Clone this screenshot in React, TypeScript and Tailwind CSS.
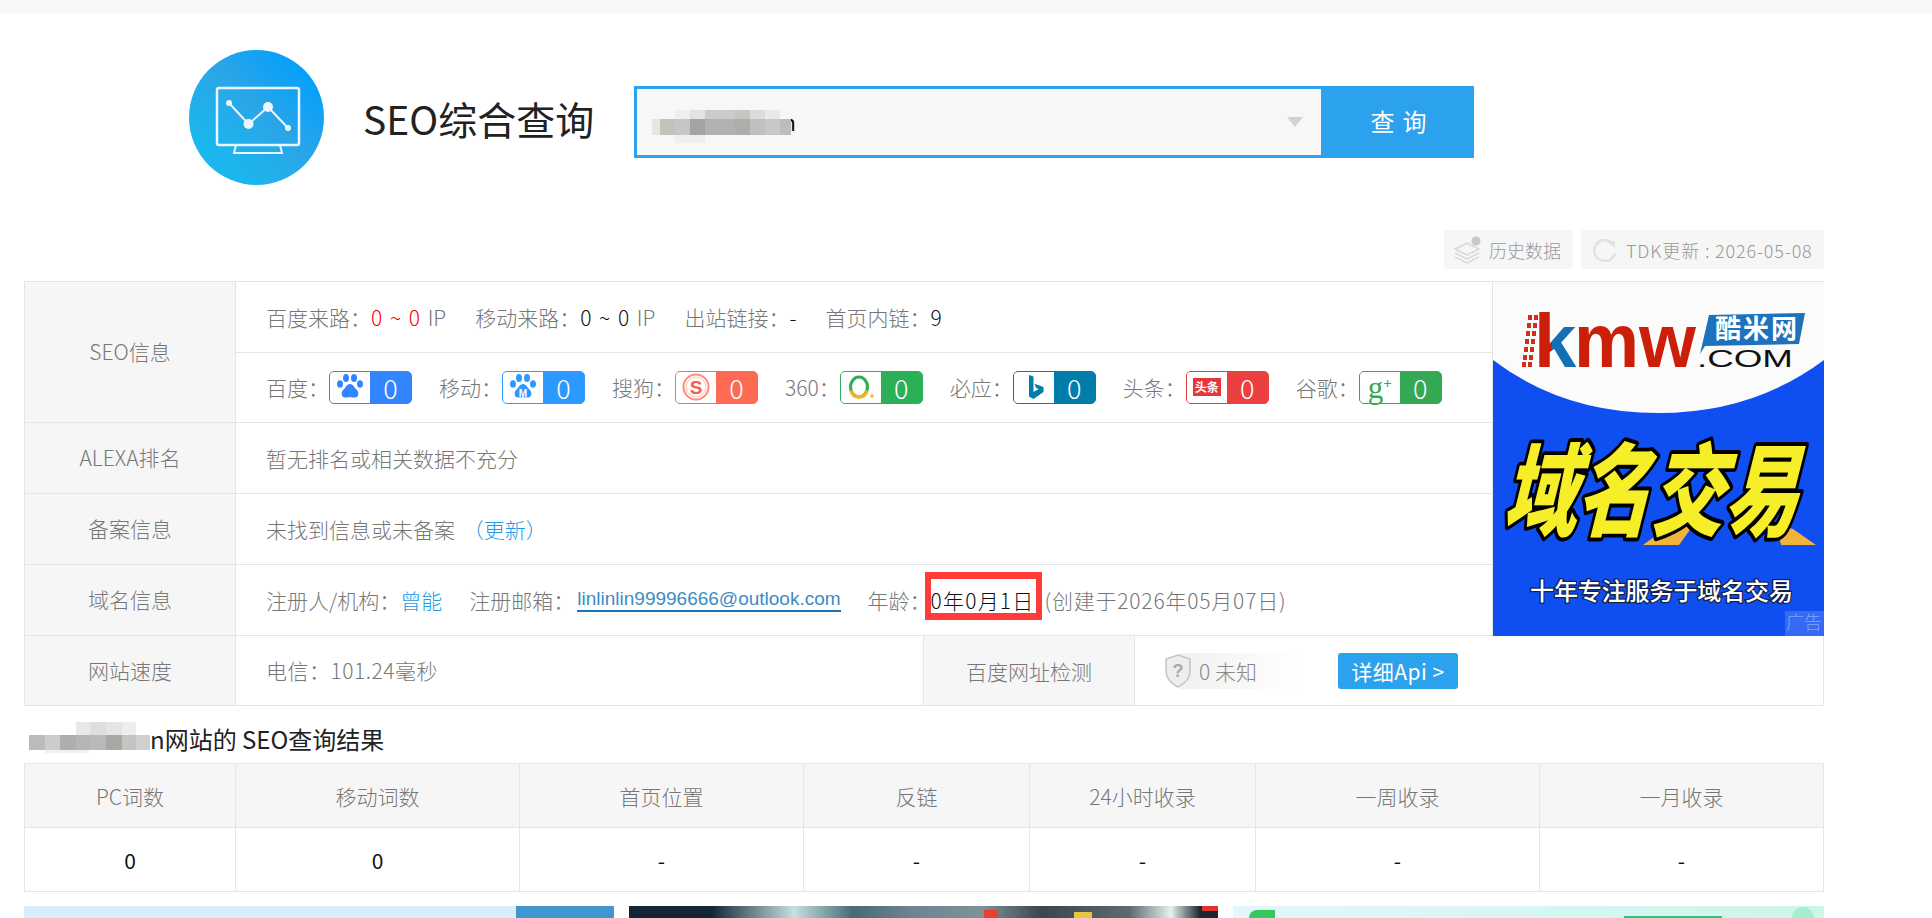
import React from "react";

const Mosaic = ({ blocks, w, h }: { blocks: [number, number, number, number, string][]; w: number; h: number }) => (
  <svg width={w} height={h} viewBox={`0 0 ${w} ${h}`} className="block">
    {blocks.map((b, i) => (
      <rect key={i} x={b[0]} y={b[1]} width={b[2]} height={b[3]} fill={b[4]} />
    ))}
  </svg>
);

const Paw = ({ c, m }: { c: string; m?: boolean }) => (
  <svg width="28" height="28" viewBox="0 0 28 28">
    <ellipse cx="10" cy="5" rx="3" ry="4" fill={c} />
    <ellipse cx="18" cy="5" rx="3" ry="4" fill={c} />
    <ellipse cx="4" cy="11" rx="3" ry="3.8" fill={c} />
    <ellipse cx="24" cy="11" rx="3" ry="3.8" fill={c} />
    <path d="M14 11c-3 0-4 3-6 5-2 2-3 4-2 6.500 1 2.500 4 2.500 8 1.500 4 1 7 1 8-1.500 1-2.500 0-4.500-2-6.500-2-2-3-5-6-5z" fill={c} />
    {m && (
      <text x="14" y="24" textAnchor="middle" fontSize="10" fontWeight="700" fill="#fff" fontFamily="Liberation Sans">
        M
      </text>
    )}
  </svg>
);

const Sogou = () => (
  <svg width="30" height="30" viewBox="0 0 30 30">
    <circle cx="15" cy="15" r="12.500" fill="none" stroke="#ff8a78" strokeWidth="2" />
    <circle cx="15" cy="15" r="10" fill="none" stroke="#ffc4ba" strokeWidth="1" />
    <text x="15" y="21.500" textAnchor="middle" fontSize="19" fontWeight="700" fill="#f4604a" fontFamily="Liberation Sans">
      S
    </text>
  </svg>
);

const Q360 = () => (
  <svg width="32" height="30" viewBox="0 0 32 30">
    <ellipse cx="14" cy="15" rx="8.500" ry="10" fill="none" stroke="#2fae57" strokeWidth="3.200" />
    <path d="M5.800 18.500C7 23 10.500 25 14 25s7-2 8.200-6.500" fill="none" stroke="#f5b323" strokeWidth="3.200" />
    <circle cx="27" cy="24" r="1.700" fill="#f5b323" />
  </svg>
);

const Bing = () => (
  <svg width="24" height="30" viewBox="0 0 24 30">
    <path d="M7 3l4.500 1.500v15.500l5-3-2.500-1.200-1.500-4 9 3.200v5L11.500 27 7 24.500z" fill="#007dab" />
  </svg>
);

const Toutiao = () => (
  <span className="flex h-[18px] w-[28px] items-center justify-center bg-[#e8343b] text-[12px] font-bold leading-[18px] text-white">头条</span>
);

const GPlus = () => (
  <span className="flex items-start font-['Liberation_Serif',serif] text-[#34a853]">
    <span className="text-[31px] leading-[27px]">g</span>
    <span className="text-[15px] font-bold leading-[18px]">+</span>
  </span>
);

const Badge = ({ label, color, icon }: { label: string; color: string; icon: React.ReactNode }) => (
  <div className="flex items-center">
    <span>{label}：</span>
    <span className="flex h-[33px] w-[83px] items-stretch rounded-[5px] border" style={{ borderColor: color, background: color }}>
      <span className="flex w-[40px] items-center justify-center rounded-l-[4px] bg-white">{icon}</span>
      <span className="flex flex-1 items-center justify-center text-[27px] font-light leading-[31px] text-white">0</span>
    </span>
  </div>
);

const LabelCell = ({ children, className = "" }: { children: React.ReactNode; className?: string }) => (
  <div className={`flex items-center justify-center border-r border-b border-[#e5e5e5] bg-[#f6f6f6] pb-[2px] ${className}`}>{children}</div>
);

const Row = ({ children, className = "" }: { children: React.ReactNode; className?: string }) => (
  <div className={`flex items-center gap-[27px] border-r border-b border-[#e5e5e5] pb-[1px] pl-[30px] ${className}`}>{children}</div>
);

const Ad = () => (
  <svg viewBox="0 0 331 354" width="331" height="354" className="block">
    <defs>
      <linearGradient id="kk" x1="0" x2="1" y1="0" y2="0">
        <stop offset="0.42" stopColor="#cc1f0a" />
        <stop offset="0.43" stopColor="#1370b5" />
      </linearGradient>
    </defs>
    <rect width="331" height="354" fill="#0f4ff2" />
    <path d="M0 78Q70 131 165 131T331 78V0H0Z" fill="#fbfbfb" />
    {[33, 41, 49, 57, 65, 73, 80].map((y, i) => (
      <g key={y} fill="#d92a18">
        <rect x={35 - i} y={y} width="4" height="5" />
        <rect x={41 - i} y={y} width="4" height="5" />
      </g>
    ))}
    <text x="41" y="85" fontFamily="Liberation Sans" fontWeight="700" fontSize="76" fill="url(#kk)">k</text>
    <text x="81" y="85" fontFamily="Liberation Sans" fontWeight="700" fontSize="76" fill="#cc1f0a" textLength="122" lengthAdjust="spacingAndGlyphs">mw</text>
    <path d="M216 33L312 31 306 62 212 64 207 72Z" fill="#1d72bb" />
    <text x="222" y="56" fontFamily="Noto Sans CJK SC" fontWeight="700" fontSize="26" fill="#fff" textLength="82">酷米网</text>
    <text x="204" y="85" fontFamily="Liberation Sans" fontSize="23" fill="#111" textLength="96" lengthAdjust="spacingAndGlyphs">.COM</text>
    <path d="M150 263L192 232 204 238 186 263Z" fill="#f0b43a" />
    <path d="M288 263L284 243 300 247 323 263Z" fill="#f0b43a" />
    <text transform="translate(9 246) skewX(-14) scale(0.82 1.12)" fontFamily="Noto Sans CJK SC" fontWeight="900" fontSize="90" fill="#f7ee2a" stroke="#000" strokeWidth="7" strokeLinejoin="round" paintOrder="stroke">域名交易</text>
    <text x="37" y="318" fontFamily="Noto Sans CJK SC" fontWeight="500" fontSize="24" fill="#fff" stroke="#13204a" strokeWidth="2.500" paintOrder="stroke" textLength="263">十年专注服务于域名交易</text>
    <rect x="292" y="329" width="39" height="25" fill="#fff" fillOpacity="0.16" />
    <text x="293" y="347" fontFamily="Noto Sans CJK SC" fontSize="18" fill="#7da6f5">广告</text>
  </svg>
);

export default function App() {
  return (
    <div className="h-[918px] w-full overflow-hidden bg-white font-['Noto_Sans_CJK_SC',sans-serif] text-[21px] font-light leading-[30px] text-[#777]">
      <div className="h-[13px] bg-[#f7f7f7]" />

      {/* header */}
      <div className="flex h-[217px] items-start pl-[189px] pt-[37px]">
        <div className="flex h-[135px] w-[135px] items-center justify-center rounded-full bg-[linear-gradient(45deg,#14c0f2,#2aa5e8_55%,#05a0fb_85%)]">
          <svg width="135" height="135" viewBox="0 0 135 135">
            <rect x="28" y="38" width="82" height="57" rx="2" fill="none" stroke="#eaf6fd" strokeWidth="2.500" />
            <path d="M47 95l-2 8h48l-2-8M45 103h48" fill="none" stroke="#eaf6fd" strokeWidth="2" />
            <path d="M40 53L59.500 74 79 57 99 78" fill="none" stroke="#eaf6fd" strokeWidth="2" />
            <circle cx="40" cy="53" r="3" fill="#eaf6fd" />
            <circle cx="59.500" cy="74" r="5" fill="#eaf6fd" />
            <circle cx="79" cy="57" r="5" fill="#eaf6fd" />
            <circle cx="99" cy="78" r="3" fill="#eaf6fd" />
          </svg>
        </div>
        <div className="ml-[39px] mt-[10px] w-[271px] text-[39px] font-normal leading-[116px] text-[#222]">SEO综合查询</div>
        <div className="relative mt-[36px] flex h-[72px] w-[840px]">
          <div className="relative flex flex-1 items-center border-[3px] border-r-0 border-[#2ca1ed] bg-[#f7f7f7]">
            <span className="absolute left-[146px] top-[18px] text-[21px] font-normal text-black">n</span>
            <div className="absolute left-[15px] top-[21px]">
              <Mosaic
                w={140}
                h={33}
                blocks={[
                  [23, 0, 15, 9, "#f0efef"],
                  [38, 0, 15, 9, "#e3e3e3"],
                  [53, 0, 30, 9, "#cbcbcb"],
                  [83, 0, 15, 9, "#c6c6c5"],
                  [98, 0, 15, 9, "#dcdcdc"],
                  [113, 0, 15, 9, "#e9e9e9"],
                  [0, 9, 8, 16, "#e6e5e4"],
                  [8, 9, 15, 16, "#c5c2be"],
                  [23, 9, 15, 16, "#c4c6c8"],
                  [38, 9, 15, 16, "#a5a4a4"],
                  [53, 9, 30, 16, "#b1b1b1"],
                  [83, 9, 15, 16, "#aeadaa"],
                  [98, 9, 15, 16, "#c0c0c2"],
                  [113, 9, 15, 16, "#c8c8ca"],
                  [128, 9, 11, 16, "#bdbdbd"],
                  [23, 25, 30, 8, "#efefef"],
                ]}
              />
            </div>
            <svg className="absolute right-[18px] top-[28px]" width="16" height="10" viewBox="0 0 16 10">
              <path d="M0 0H16L8 10Z" fill="#d2d2d2" />
            </svg>
          </div>
          <button className="flex w-[153px] items-center justify-center bg-[#2ca1ed] pl-[10px] pb-[2px] text-[24px] font-normal tracking-[8px] text-white">查询</button>
        </div>
      </div>

      {/* toolbar */}
      <div className="ml-[24px] flex h-[51px] w-[1800px] items-start justify-end gap-[8px] text-[18px] text-[#999]">
        <div className="flex h-[39px] w-[129px] items-center rounded-[3px] bg-[#f6f6f6] pl-[9px]">
          <svg width="28" height="28" viewBox="0 0 28 28">
            <path d="M14 7L26 13 14 19 2 13Z" fill="none" stroke="#d8d8d8" strokeWidth="1.500" />
            <path d="M2 17l12 6 12-6M2 21l12 6 12-6" fill="none" stroke="#d8d8d8" strokeWidth="1.500" />
            <circle cx="23" cy="5" r="4.500" fill="#c9c9c9" />
          </svg>
          <span className="ml-[8px]">历史数据</span>
        </div>
        <div className="flex h-[39px] w-[243px] items-center rounded-[3px] bg-[#f6f6f6] pl-[12px]">
          <svg width="24" height="24" viewBox="0 0 24 24">
            <path d="M20 6A10.500 10.500 0 1 0 22 15" fill="none" stroke="#e2e2e2" strokeWidth="2.500" />
            <path d="M13 3l9 0 0 7z" fill="#e2e2e2" />
          </svg>
          <span className="ml-[9px] tracking-[0.85px]">TDK更新 : 2026-05-08</span>
        </div>
      </div>

      {/* info table */}
      <div className="ml-[24px] grid w-[1800px] grid-cols-[211px_1257px_331px] grid-rows-[71px_70px_71px_71px_71px_70px] border-t border-l border-[#e5e5e5]">
        <LabelCell className="row-span-2">SEO信息</LabelCell>
        <Row className="gap-[29px] [word-spacing:3px]">
          <span>
            百度来路：<span className="text-[#f00]">0 ~ 0</span> IP
          </span>
          <span>
            移动来路：<span className="text-[#111]">0 ~ 0</span> IP
          </span>
          <span>
            出站链接：<span className="text-[#111]">-</span>
          </span>
          <span>
            首页内链：<span className="text-[#111]">9</span>
          </span>
        </Row>
        <div className="row-span-5 border-r border-b border-[#e5e5e5]">
          <Ad />
        </div>
        <Row>
          <Badge label="百度" color="#3385ff" icon={<Paw c="#3385ff" />} />
          <Badge label="移动" color="#2b99ff" icon={<Paw c="#2b99ff" m />} />
          <Badge label="搜狗" color="#ff6a55" icon={<Sogou />} />
          <Badge label="360" color="#2bb057" icon={<Q360 />} />
          <Badge label="必应" color="#007dab" icon={<Bing />} />
          <Badge label="头条" color="#ea4040" icon={<Toutiao />} />
          <Badge label="谷歌" color="#34a853" icon={<GPlus />} />
        </Row>
        <LabelCell>ALEXA排名</LabelCell>
        <Row>暂无排名或相关数据不充分</Row>
        <LabelCell>备案信息</LabelCell>
        <Row>
          <span>
            未找到信息或未备案 <span className="ml-[3px] text-[#1e9bec]">（更新）</span>
          </span>
        </Row>
        <LabelCell>域名信息</LabelCell>
        <Row>
          <span>
            注册人/机构：<span className="text-[#1e9bec]">曾能</span>
          </span>
          <span className="flex items-center">
            注册邮箱：
            <span className="ml-[3px] border-b-2 border-[#1775bb] font-['Liberation_Sans',sans-serif] text-[19px] font-normal leading-[23px] text-[#3c8cc4]">linlinlin99996666@outlook.com</span>
          </span>
          <span className="flex items-center">
            年龄：
            <span className="relative tracking-[1.2px] text-[#111]">
              0年0月1日
              <span className="absolute left-[-6px] top-[-13px] h-[48px] w-[117px] border-x-[6px] border-y-[7px] border-[#ff3b3b]" />
            </span>
            <span className="ml-[10px] tracking-[0.8px]">(创建于2026年05月07日)</span>
          </span>
        </Row>
        <LabelCell>网站速度</LabelCell>
        <div className="col-span-2 flex border-r border-b border-[#e5e5e5]">
          <div className="flex w-[687px] items-center pb-[1px] pl-[30px] tracking-[0.5px]">电信：101.24毫秒</div>
          <div className="flex w-[212px] items-center justify-center border-x border-[#e5e5e5] bg-[#f6f6f6]">百度网址检测</div>
          <div className="flex items-center pl-[30px]">
            <svg className="relative z-10" width="26" height="34" viewBox="0 0 26 34">
              <path d="M13 1L25 5V17C25 25 19 30 13 33 7 30 1 25 1 17V5Z" fill="#eee" stroke="#c4c4c4" strokeWidth="1.500" />
              <text x="13" y="23" textAnchor="middle" fontSize="18" fontWeight="700" fill="#aaa" fontFamily="Liberation Sans">?</text>
            </svg>
            <span className="-ml-[11px] flex h-[36px] w-[120px] items-center bg-[linear-gradient(90deg,#f0f0f0,#ffffff)] pl-[19px] text-[#888]">0 未知</span>
            <span className="ml-[38px] flex h-[36px] w-[120px] items-center justify-center rounded-[3px] bg-[#2ca1ed] font-normal tracking-[0.5px] text-white">详细Api &gt;</span>
          </div>
        </div>
      </div>

      {/* results title */}
      <div className="relative ml-[24px] flex h-[57px] items-end pb-[9px] text-[24px] font-normal text-[#222]">
        <div className="absolute left-[5px] top-[16px]">
          <Mosaic
            w={121}
            h={31}
            blocks={[
              [47, 0, 14, 13, "#e8e8e8"],
              [61, 0, 16, 13, "#dedede"],
              [77, 0, 16, 13, "#e5e5e5"],
              [93, 0, 14, 13, "#eeeeee"],
              [0, 13, 16, 15, "#bbbbbb"],
              [16, 13, 15, 15, "#cccccc"],
              [31, 13, 16, 15, "#aeaeae"],
              [47, 13, 14, 15, "#b5b5b5"],
              [61, 13, 16, 15, "#b9b9b9"],
              [77, 13, 16, 15, "#aaa8a5"],
              [93, 13, 14, 15, "#c4c4c4"],
              [107, 13, 14, 15, "#d0d0d0"],
              [16, 28, 44, 3, "#f0f0f0"],
            ]}
          />
        </div>
        <span className="ml-[126px]">n网站的 SEO查询结果</span>
      </div>

      {/* results table */}
      <div className="ml-[24px] grid w-[1800px] grid-cols-[211px_284px_284px_226px_226px_284px_284px] grid-rows-[64px_64px] border-t border-l border-[#e5e5e5] text-center">
        {["PC词数", "移动词数", "首页位置", "反链", "24小时收录", "一周收录", "一月收录"].map((t) => (
          <div key={t} className="flex items-center justify-center border-r border-b border-[#e5e5e5] bg-[#f6f6f6]">
            {t}
          </div>
        ))}
        {["0", "0", "-", "-", "-", "-", "-"].map((t, i) => (
          <div key={i} className="flex items-center justify-center border-r border-b border-[#e5e5e5] font-normal text-[#111]">
            {t}
          </div>
        ))}
      </div>

      {/* banners */}
      <div className="ml-[24px] mt-[14px] flex h-[12px] w-[1800px] gap-[15px] overflow-hidden">
        <div className="flex w-[590px] justify-end bg-[#d6eefb]">
          <div className="w-[98px] bg-[#3f97ce]" />
        </div>
        <div className="relative w-[589px] bg-[linear-gradient(90deg,#152534_0%,#152534_14%,#c5e0e0_28%,#4a6a76_38%,#6d848e_48%,#7f929b_60%,#3a4650_70%,#5f6a70_85%,#e8f0ee_92%,#1a2530_97%)]">
          <span className="absolute left-[355px] top-[4px] h-[8px] w-[14px] bg-[#e8402f]" />
          <span className="absolute left-[445px] top-[6px] h-[6px] w-[18px] bg-[#e5c542]" />
          <span className="absolute right-0 top-0 h-[5px] w-[16px] bg-[#e0352b]" />
        </div>
        <div className="relative w-[591px] bg-[linear-gradient(90deg,#e3f6fb,#cdf5ea)]">
          <span className="absolute left-[16px] top-[4px] h-[8px] w-[26px] rounded-tl-[8px] bg-[#35c85f]" />
          <span className="absolute left-[391px] top-[10px] h-[2px] w-[98px] bg-[#2cc47f]" />
          <span className="absolute right-[10px] top-[1px] h-[11px] w-[22px] rounded-t-full bg-[#a5efcc]" />
        </div>
      </div>
    </div>
  );
}
